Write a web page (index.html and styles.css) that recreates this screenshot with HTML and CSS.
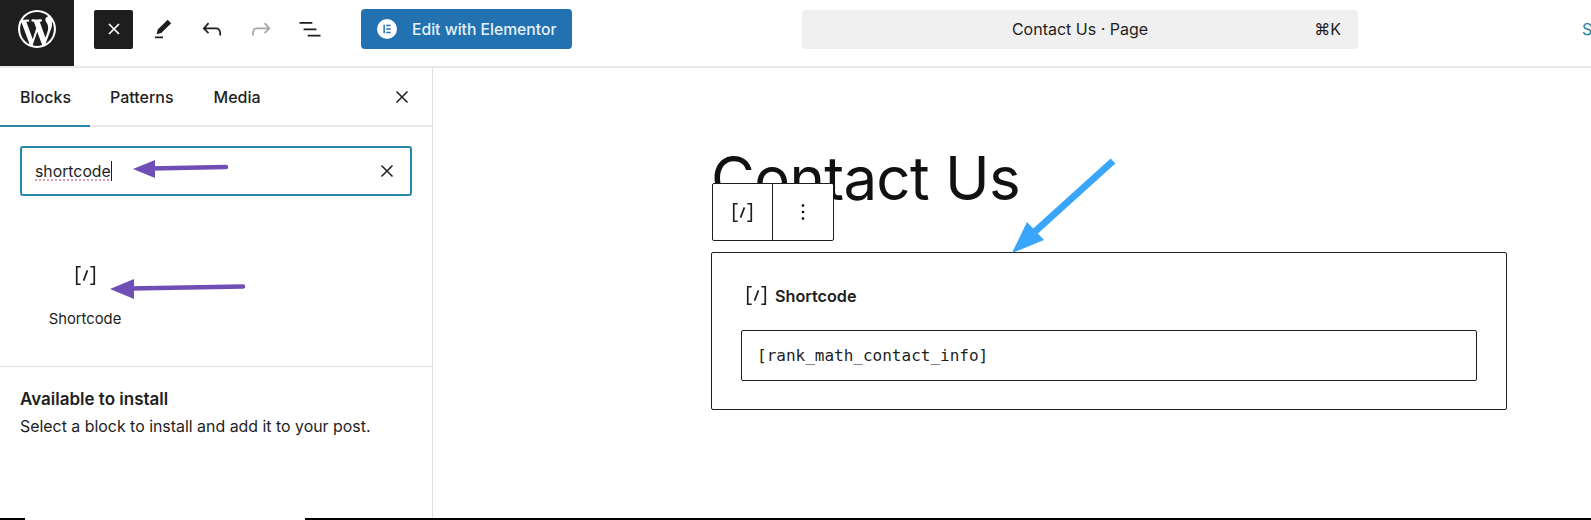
FILE: index.html
```html
<!DOCTYPE html>
<html lang="en">
<head>
  <meta charset="UTF-8" />
  <title>Contact Us · Page</title>
  <link rel="stylesheet" href="styles.css">
</head>
<body>
  <div class="app">
    <header class="topbar">
      <a class="wp-logo">
        <svg viewBox="0 0 20 20" width="38" height="38"><path fill="#fff" d="M20 10c0-5.51-4.49-10-10-10C4.48 0 0 4.49 0 10c0 5.52 4.48 10 10 10 5.51 0 10-4.48 10-10zM7.78 15.37L4.37 6.22c.55-.02 1.17-.08 1.17-.08.5-.06.44-1.13-.06-1.11 0 0-1.45.11-2.37.11-.18 0-.37 0-.58-.01C4.12 2.69 6.87 1.11 10 1.11c2.33 0 4.45.87 6.05 2.34-.68-.11-1.65.39-1.65 1.58 0 .74.45 1.36.9 2.1.35.61.55 1.36.55 2.46 0 1.49-1.4 5-1.4 5l-3.03-8.37c.54-.02.82-.17.82-.17.5-.05.44-1.25-.06-1.22 0 0-1.44.12-2.38.12-.87 0-2.33-.12-2.33-.12-.5-.03-.56 1.2-.06 1.22l.92.08 1.26 3.41zM17.41 10c.24-.64.74-1.87.43-4.25.7 1.29 1.05 2.71 1.05 4.25 0 3.29-1.73 6.24-4.4 7.78.97-2.59 1.94-5.2 2.92-7.78zM6.1 18.09C3.12 16.65 1.11 13.53 1.11 10c0-1.3.23-2.48.72-3.59C3.25 10.3 4.67 14.2 6.1 18.09zm4.03-6.63l2.58 6.98c-.86.29-1.76.45-2.71.45-.79 0-1.57-.11-2.29-.33.81-2.38 1.62-4.74 2.42-7.1z"/></svg>
      </a>
      <div class="topbar-row">
        <button class="close-btn">
          <svg viewBox="0 0 14 14" width="14" height="14"><path d="M2 2l10 10M12 2L2 12" stroke="#fff" stroke-width="1.7" fill="none"/></svg>
        </button>
        <div class="tools">
          <svg class="tool" viewBox="0 0 24 24"><path d="m19 7-3-3-8.5 8.5-1 4 4-1L19 7Zm-7 11.5H5V20h7v-1.5Z"/></svg>
          <svg class="tool" viewBox="0 0 24 24"><path d="M18.3 11.7c-.6-.6-1.4-.9-2.3-.9H6.7l2.9-3.3-1.1-1-4.5 5L8.5 16l1-1-2.7-2.7H16c.5 0 .9.2 1.3.5 1 1 1 3.4 1 4.5v.3h1.5v-.2c0-1.5 0-4.3-1.5-5.7z"/></svg>
          <svg class="tool tool-off" viewBox="0 0 24 24"><path d="M15.6 6.5l-1.1 1 2.9 3.3H8c-.9 0-1.7.3-2.3.9-1.4 1.5-1.4 4.2-1.4 5.7v.2h1.5v-.3c0-1.5 0-3.5 1-4.5.3-.3.7-.5 1.3-.5h9.2L14.5 15l1.1 1.1 4.6-4.6-4.6-5z"/></svg>
          <svg class="tool" viewBox="0 0 24 24"><path d="M3 6h11v1.5H3V6Zm3.5 5.5h11V13h-11v-1.5ZM21 17H10v1.5h11V17Z"/></svg>
        </div>
        <button class="elementor-btn">
          <svg viewBox="0 0 20 20" width="20" height="20"><circle cx="10" cy="10" r="10" fill="#fff"/><path fill="#2271b1" d="M6.4 5.8h1.5v8.4H6.4zM9.2 5.8h4.4v1.5H9.2zM9.2 9.2h4.4v1.5H9.2zM9.2 12.7h4.4v1.5H9.2z"/></svg>
          Edit with Elementor
        </button>
        <div class="command-bar">
          <span class="command-title">Contact Us · Page</span>
          <span class="command-key">⌘K</span>
        </div>
        <span class="save-link">S</span>
      </div>
    </header>

    <div class="workspace">
      <aside class="inserter">
        <div class="tabs">
          <span class="tab tab-active">Blocks</span>
          <span class="tab tab-patterns">Patterns</span>
          <span class="tab tab-media">Media</span>
          <svg class="tabs-close" viewBox="0 0 14 14" width="14" height="14"><path d="M1.5 1.5l11 11M12.5 1.5l-11 11" stroke="#1e1e1e" stroke-width="1.5" fill="none"/></svg>
        </div>
        <div class="search-wrap">
          <div class="search-box">
            <span class="search-text"><span class="misspelt">shortcode</span><span class="caret"></span></span>
            <svg viewBox="0 0 14 14" width="14" height="14"><path d="M1.5 1.5l11 11M12.5 1.5l-11 11" stroke="#1e1e1e" stroke-width="1.5" fill="none"/></svg>
          </div>
        </div>
        <div class="results">
          <div class="result-item">
            <svg class="shortcode-icon" viewBox="0 0 24 24"><path d="M8 4.75H4.75v14.5H8M16 4.75h3.25v14.5H16M13.6 7.8l-3.2 8.4"/></svg>
            <span class="result-label">Shortcode</span>
          </div>
        </div>
        <div class="install">
          <h2>Available to install</h2>
          <p>Select a block to install and add it to your post.</p>
        </div>
      </aside>

      <main class="canvas">
        <div class="post">
          <h1>Contact Us</h1>
          <div class="block-toolbar">
            <span class="toolbar-cell toolbar-type">
              <svg class="shortcode-icon" viewBox="0 0 24 24"><path d="M8 4.75H4.75v14.5H8M16 4.75h3.25v14.5H16M13.6 7.8l-3.2 8.4"/></svg>
            </span>
            <span class="toolbar-cell toolbar-more">
              <svg viewBox="0 0 4 20" width="4" height="20"><circle cx="2" cy="3.5" r="1.3"/><circle cx="2" cy="10" r="1.3"/><circle cx="2" cy="16.5" r="1.3"/></svg>
            </span>
          </div>
          <section class="shortcode-block">
            <div class="shortcode-head">
              <svg class="shortcode-icon" viewBox="0 0 24 24"><path d="M8 4.75H4.75v14.5H8M16 4.75h3.25v14.5H16M13.6 7.8l-3.2 8.4"/></svg>
              <span>Shortcode</span>
            </div>
            <div class="shortcode-input">[rank_math_contact_info]</div>
          </section>
        </div>
      </main>
    </div>

    <div class="bottom-edge"><span class="edge-a"></span><span class="edge-b"></span></div>
  </div>

  <!-- annotation arrows drawn over the screenshot -->
  <svg class="annotations" viewBox="0 0 1591 520" width="1591" height="520">
    <path d="M150 168.5L226 167" stroke="#6f4fb5" stroke-width="4.5" stroke-linecap="round" fill="none"/>
    <path d="M133 169L155 160V178Z" fill="#6f4fb5"/>
    <path d="M130 288.5L243 286.5" stroke="#6f4fb5" stroke-width="4.5" stroke-linecap="round" fill="none"/>
    <path d="M110 289L134 279V299Z" fill="#6f4fb5"/>
    <path d="M1113 161L1030 236" stroke="#3aa6fb" stroke-width="7" fill="none"/>
    <path d="M1012 253L1027 222L1044 240Z" fill="#3aa6fb"/>
  </svg>
</body>
</html>
```

FILE: styles.css
```css
* {
  box-sizing: border-box;
  margin: 0;
  padding: 0;
}

body {
  width: 1591px;
  height: 520px;
  overflow: hidden;
  background: #fff;
  color: #1e1e1e;
  font-family: 'Inter', 'Noto Sans', sans-serif;
  position: relative;
}

.app {
  display: flex;
  flex-direction: column;
  height: 100%;
}

/* top bar */
.topbar {
  display: flex;
  height: 68px;
  flex-shrink: 0;
  border-bottom: 2px solid #e8e8e8;
}

.wp-logo {
  width: 74px;
  background: #1e1e1e;
  display: flex;
  align-items: center;
  justify-content: center;
  padding-bottom: 8px;
}

.topbar-row {
  flex: 1;
  display: flex;
  align-items: center;
  padding: 0 0 8px 20px;
  overflow: hidden;
}

.close-btn {
  width: 39px;
  height: 39px;
  background: #1e1e1e;
  border: 0;
  border-radius: 2px;
  display: flex;
  align-items: center;
  justify-content: center;
}

.tools {
  display: flex;
  gap: 21px;
  margin-left: 16px;
}

.tool {
  width: 28px;
  height: 28px;
  fill: #1e1e1e;
}

.tool-off {
  fill: #a7a7a7;
}

.elementor-btn {
  display: flex;
  align-items: center;
  gap: 15px;
  width: 211px;
  height: 40px;
  margin-left: 37px;
  padding-left: 16px;
  background: #2271b1;
  border: 0;
  border-radius: 4px;
  color: #e6f1fa;
  font: 500 15.7px 'Inter', sans-serif;
}

.command-bar {
  position: relative;
  display: flex;
  align-items: center;
  justify-content: center;
  width: 556px;
  height: 39px;
  margin-left: 230px;
  background: #f0f0f0;
  border-radius: 4px;
  font-size: 16px;
}

.command-key {
  position: absolute;
  right: 17px;
}

.save-link {
  margin-left: auto;
  width: 9px;
  color: #2a7f9e;
  font-size: 16px;
}

/* workspace */
.workspace {
  flex: 1;
  display: flex;
  min-height: 0;
}

.inserter {
  width: 433px;
  flex-shrink: 0;
  border-right: 1px solid #e0e0e0;
  display: flex;
  flex-direction: column;
}

.tabs {
  display: flex;
  align-items: center;
  height: 59px;
  padding-left: 20px;
  border-bottom: 2px solid #e8e8e8;
  position: relative;
  font-size: 16px;
  font-weight: 500;
}

.tab-active::after {
  content: "";
  position: absolute;
  left: 0;
  bottom: -2px;
  width: 90px;
  height: 2px;
  background: #2a86a8;
}

.tab-patterns {
  margin-left: 39px;
}

.tab-media {
  margin-left: 40px;
}

.tabs-close {
  margin-left: auto;
  margin-right: 23px;
}

.search-wrap {
  padding: 19px 20px 0;
}

.search-box {
  display: flex;
  align-items: center;
  justify-content: space-between;
  height: 50px;
  width: 392px;
  padding: 0 16px 0 13px;
  border: 2px solid #2a86a8;
  border-radius: 3px;
  font-size: 15.8px;
}

.search-text {
  display: flex;
  align-items: center;
}

.misspelt {
  text-decoration: underline dotted #d77a8a;
  text-underline-offset: 3px;
}

.caret {
  width: 1px;
  height: 20px;
  background: #1e1e1e;
}

.results {
  height: 171px;
  padding-top: 65px;
  border-bottom: 1px solid #e0e0e0;
}

.result-item {
  width: 170px;
  display: flex;
  flex-direction: column;
  align-items: center;
  gap: 21px;
}

.shortcode-icon {
  width: 29px;
  height: 29px;
  fill: none;
  stroke: #1e1e1e;
  stroke-width: 1.4;
}

.result-label {
  font-size: 14.8px;
  line-height: 17px;
}

.install {
  padding: 22px 20px 0;
}

.install h2 {
  font-size: 17px;
  font-weight: 600;
  line-height: 20px;
}

.install p {
  font-size: 15.9px;
  line-height: 20px;
  margin-top: 8px;
}

/* editor canvas */
.canvas {
  flex: 1;
  padding-left: 278px;
}

.post {
  position: relative;
  width: 796px;
}

.post h1 {
  font-size: 60px;
  font-weight: 400;
  line-height: 75px;
  height: 184px;
  padding-top: 73px;
  letter-spacing: -0.7px;
  color: #111;
}

.block-toolbar {
  position: absolute;
  top: 115px;
  left: 1px;
  display: flex;
  width: 122px;
  height: 58px;
  background: #fff;
  border: 1px solid #1e1e1e;
  border-radius: 2px;
}

.toolbar-cell {
  display: flex;
  align-items: center;
  justify-content: center;
}

.toolbar-type {
  width: 60px;
  border-right: 1px solid #1e1e1e;
}

.toolbar-more {
  flex: 1;
}

.shortcode-block {
  height: 158px;
  padding: 28px 29px 0;
  border: 1px solid #1e1e1e;
  border-radius: 2px;
}

.shortcode-head {
  display: flex;
  align-items: center;
  gap: 4px;
  height: 29px;
  padding-left: 1px;
  font-size: 16.2px;
  font-weight: 600;
}

.shortcode-input {
  display: flex;
  align-items: center;
  height: 51px;
  margin-top: 20px;
  padding-left: 15px;
  border: 1px solid #1e1e1e;
  border-radius: 2px;
  font-family: 'DejaVu Sans Mono', monospace;
  font-size: 16px;
}

.bottom-edge {
  display: flex;
  height: 2px;
  flex-shrink: 0;
}

.edge-a {
  width: 25px;
  background: #000;
}

.edge-b {
  flex: 1;
  margin-left: 280px;
  background: #000;
}

.annotations {
  position: absolute;
  left: 0;
  top: 0;
  pointer-events: none;
}
```
